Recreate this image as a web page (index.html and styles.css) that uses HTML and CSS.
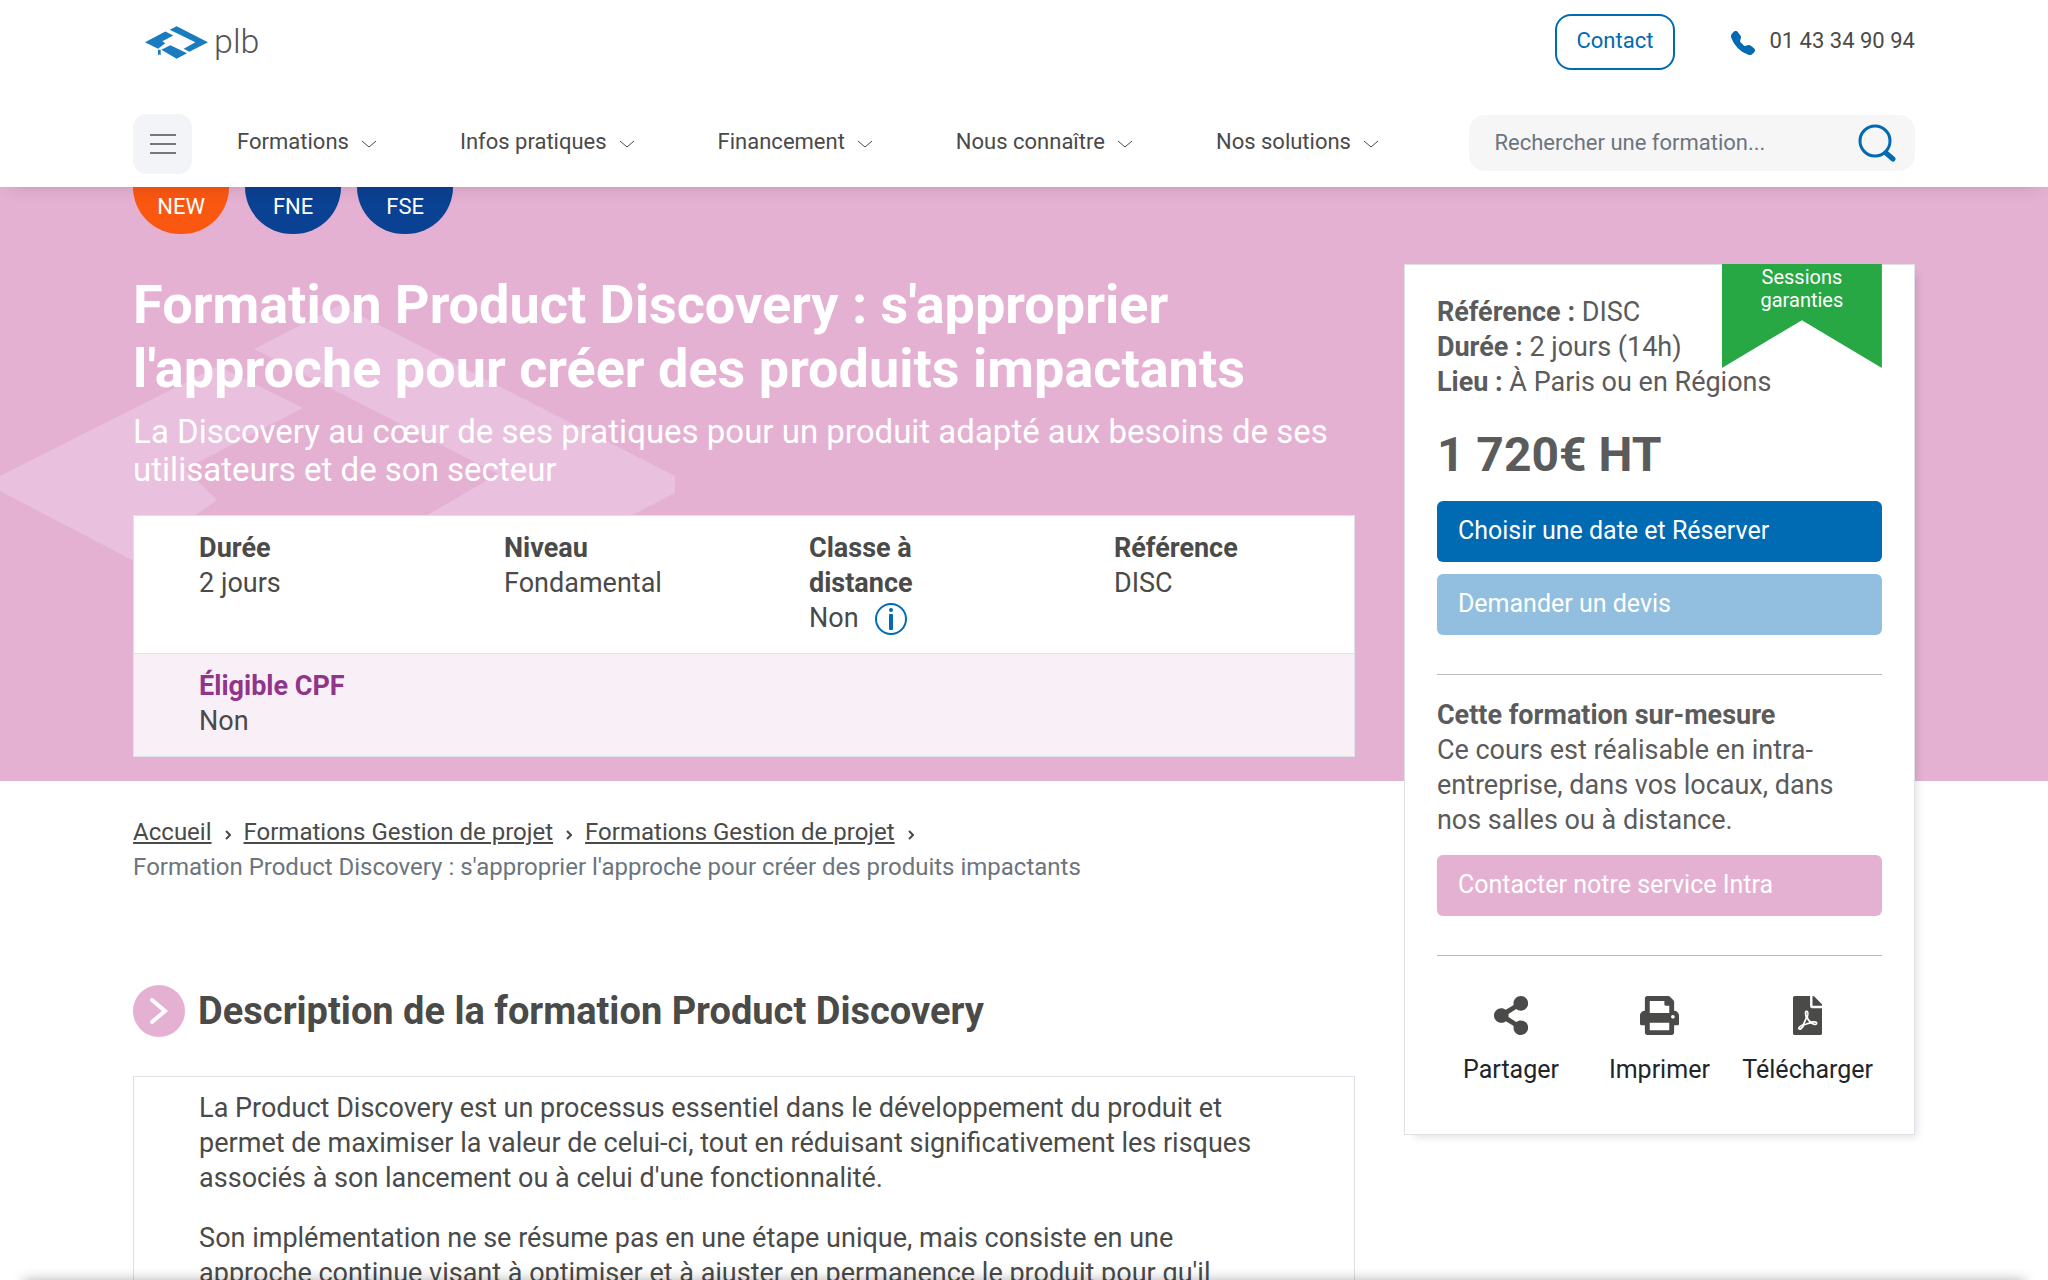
FILE: index.html
```
<!DOCTYPE html>
<html lang="fr">
<head>
    <meta charset="UTF-8">
    <meta name="viewport" content="width=device-width, initial-scale=1.0">
    <title>Formation Product Discovery</title>
    <link rel="stylesheet" href="styles.css">
</head>
<body>
    <header class="header">
        <div class="header-top">
            <a class="logo" href="#" aria-label="plb">
                <svg class="logo-mark" viewBox="45 50 189 98">
                    <path d="M45 98L106 66L130 78L97 95L106 101L84 118Z"/>
                    <path d="M119 61L140 50L234 98L178 127L161 118L196 98Z"/>
                    <path d="M94 121L121 107L171 131L140 148Z"/>
                    <path d="M84 121H92V138L88 134L84 138Z"/>
                </svg>
                <span class="logo-text">plb</span>
            </a>
            <div class="header-contact">
                <a class="btn-contact" href="#">Contact</a>
                <a class="phone" href="tel:0143349094">
                    <svg class="phone-icon" viewBox="0 0 16 16"><path d="M1.885.511a1.745 1.745 0 0 1 2.61.163L6.29 2.98c.329.423.445.974.315 1.494l-.547 2.19a.68.68 0 0 0 .178.643l2.457 2.457a.68.68 0 0 0 .644.178l2.189-.547a1.75 1.75 0 0 1 1.494.315l2.306 1.794c.829.645.905 1.87.163 2.611l-1.034 1.034c-.74.74-1.846 1.065-2.877.702a18.6 18.6 0 0 1-7.01-4.42 18.6 18.6 0 0 1-4.42-7.009c-.362-1.03-.037-2.137.703-2.877z"/></svg>
                    <span>01 43 34 90 94</span>
                </a>
            </div>
        </div>
        <div class="header-nav">
            <button class="burger" type="button" aria-label="Menu">
                <svg viewBox="0 0 28 22"><path d="M1 2H27M1 11H27M1 20H27"/></svg>
            </button>
            <nav class="nav">
                <a href="#">Formations <svg class="chevron" viewBox="0 0 16 8"><path d="M1 1L8 7L15 1"/></svg></a>
                <a href="#">Infos pratiques <svg class="chevron" viewBox="0 0 16 8"><path d="M1 1L8 7L15 1"/></svg></a>
                <a href="#">Financement <svg class="chevron" viewBox="0 0 16 8"><path d="M1 1L8 7L15 1"/></svg></a>
                <a href="#">Nous connaître <svg class="chevron" viewBox="0 0 16 8"><path d="M1 1L8 7L15 1"/></svg></a>
                <a href="#">Nos solutions <svg class="chevron" viewBox="0 0 16 8"><path d="M1 1L8 7L15 1"/></svg></a>
            </nav>
            <form class="search">
                <input type="text" placeholder="Rechercher une formation..." aria-label="Rechercher une formation">
                <button type="button" aria-label="Rechercher">
                    <svg viewBox="0 0 38 38"><circle cx="17" cy="17" r="15"/><path d="M28 29L35 35"/></svg>
                </button>
            </form>
        </div>
    </header>

    <div class="hero-bg">
        <svg viewBox="0 0 675 260">
            <path d="M0 176L218 66L303 108L185 169L217 200L132 260L0 191Z"/>
            <path d="M254 49L340 5L675 176V193L545 260H350L498 174Z"/>
        </svg>
    </div>

    <main class="page">
        <div class="content">
            <section class="hero">
                <div class="badges">
                    <span class="badge badge-new">NEW</span>
                    <span class="badge">FNE</span>
                    <span class="badge">FSE</span>
                </div>
                <h1>Formation Product Discovery : s'approprier l'approche pour créer des produits impactants</h1>
                <p class="subtitle">La Discovery au cœur de ses pratiques pour un produit adapté aux besoins de ses utilisateurs et de son secteur</p>
                <div class="infos">
                    <div class="infos-row">
                        <div><strong>Durée</strong><p>2 jours</p></div>
                        <div><strong>Niveau</strong><p>Fondamental</p></div>
                        <div>
                            <strong>Classe à distance</strong>
                            <p class="with-icon">Non
                                <svg class="info-icon" viewBox="0 0 32 32"><circle class="ring" cx="16" cy="16" r="15"/><circle cx="16" cy="7" r="2"/><rect x="14" y="11" width="4" height="16" rx="1"/></svg>
                            </p>
                        </div>
                        <div><strong>Référence</strong><p>DISC</p></div>
                    </div>
                    <div class="infos-row cpf">
                        <div><strong>Éligible CPF</strong><p>Non</p></div>
                    </div>
                </div>
            </section>

            <nav class="breadcrumb" aria-label="Fil d'ariane">
                <a href="#">Accueil</a>
                <svg viewBox="0 0 6 10"><path d="M1 1L5 5L1 9"/></svg>
                <a href="#">Formations Gestion de projet</a>
                <svg viewBox="0 0 6 10"><path d="M1 1L5 5L1 9"/></svg>
                <a href="#">Formations Gestion de projet</a>
                <svg viewBox="0 0 6 10"><path d="M1 1L5 5L1 9"/></svg>
                <span>Formation Product Discovery : s'approprier l'approche pour créer des produits impactants</span>
            </nav>

            <section>
                <h2>
                    <svg class="title-icon" viewBox="0 0 52 52"><circle cx="26" cy="26" r="26"/><path d="M19 15L32 26L19 37"/></svg>
                    Description de la formation Product Discovery
                </h2>
                <div class="description">
                    <p>La Product Discovery est un processus essentiel dans le développement du produit et permet de maximiser la valeur de celui-ci, tout en réduisant significativement les risques associés à son lancement ou à celui d'une fonctionnalité.</p>
                    <p>Son implémentation ne se résume pas en une étape unique, mais consiste en une approche continue visant à optimiser et à ajuster en permanence le produit pour qu'il</p>
                </div>
            </section>
        </div>

        <aside class="card">
            <div class="ribbon">Sessions garanties</div>
            <p><strong>Référence :</strong> DISC</p>
            <p><strong>Durée :</strong> 2 jours (14h)</p>
            <p><strong>Lieu :</strong> À Paris ou en Régions</p>
            <p class="price">1 720€ HT</p>
            <a class="btn btn-blue" href="#">Choisir une date et Réserver</a>
            <a class="btn btn-light" href="#">Demander un devis</a>
            <hr>
            <p><strong>Cette formation sur-mesure</strong></p>
            <p>Ce cours est réalisable en intra-entreprise, dans vos locaux, dans nos salles ou à distance.</p>
            <a class="btn btn-pink" href="#">Contacter notre service Intra</a>
            <hr>
            <div class="actions">
                <button type="button">
                    <svg viewBox="0 0 448 512"><path d="M352 320c-22.608 0-43.387 7.819-59.79 20.895l-102.486-64.054a96.551 96.551 0 0 0 0-41.683l102.486-64.054C308.613 184.181 329.392 192 352 192c53.019 0 96-42.981 96-96S405.019 0 352 0s-96 42.981-96 96c0 7.158.79 14.13 2.276 20.841L155.79 180.895C139.387 167.819 118.608 160 96 160c-53.019 0-96 42.981-96 96s42.981 96 96 96c22.608 0 43.387-7.819 59.79-20.895l102.486 64.054A96.301 96.301 0 0 0 256 416c0 53.019 42.981 96 96 96s96-42.981 96-96-42.981-96-96-96z"/></svg>
                    Partager
                </button>
                <button type="button">
                    <svg viewBox="0 0 512 512"><path d="M448 192V77.25c0-8.49-3.37-16.62-9.37-22.63L393.37 9.37c-6-6-14.14-9.37-22.63-9.37H96C78.33 0 64 14.33 64 32v160c-35.35 0-64 28.65-64 64v112c0 8.84 7.16 16 16 16h48v96c0 17.67 14.33 32 32 32h320c17.67 0 32-14.33 32-32v-96h48c8.84 0 16-7.16 16-16V256c0-35.35-28.65-64-64-64zm-64 256H128v-96h256v96zm0-224H128V64h192v48c0 8.84 7.16 16 16 16h48v96zm48 72c-13.25 0-24-10.75-24-24 0-13.26 10.75-24 24-24s24 10.74 24 24c0 13.25-10.75 24-24 24z"/></svg>
                    Imprimer
                </button>
                <button type="button">
                    <svg viewBox="0 0 384 512"><path d="M181.9 256.1c-5-16-4.9-46.9-2-46.9 8.4 0 7.6 36.9 2 46.9zm-1.7 47.2c-7.7 20.2-17.3 43.3-28.4 62.7 18.3-7 39-17.2 62.9-21.9-12.7-9.6-24.9-23.4-34.5-40.8zM86.1 428.1c0 .8 13.2-5.4 34.9-40.2-6.7 6.3-29.1 24.5-34.9 40.2zM248 160h136v328c0 13.3-10.7 24-24 24H24c-13.3 0-24-10.7-24-24V24C0 10.7 10.7 0 24 0h200v136c0 13.2 10.8 24 24 24zm-8 171.8c-20-12.2-33.3-29-42.7-53.8 4.5-18.5 11.6-46.6 6.2-64.2-4.7-29.4-42.4-26.5-47.8-6.8-5 18.3-.4 44.1 8.1 77-11.6 27.6-28.7 64.6-40.8 85.8-.1 0-.1.1-.2.1-27.1 13.9-73.6 44.5-54.5 68 5.6 6.9 16 10 21.5 10 17.9 0 35.7-18 61.1-61.8 25.8-8.5 54.1-19.1 79-23.2 21.7 11.8 47.1 19.5 64 19.5 29.2 0 31.2-32 19.7-43.4-13.9-13.6-54.3-9.7-73.6-7.2zM377 105L279 7c-4.5-4.5-10.6-7-17-7h-6v128h128v-6.1c0-6.3-2.5-12.4-7-16.9zm-74.1 255.3c4.1-2.7-2.5-11.9-42.8-9 37.1 15.8 42.8 9 42.8 9z"/></svg>
                    Télécharger
                </button>
            </div>
        </aside>
    </main>

    <div class="bottom-bar"></div>
</body>
</html>
```
FILE: styles.css
```
* {
    box-sizing: border-box;
    margin: 0;
    padding: 0;
}

body {
    position: relative;
    height: 100vh;
    overflow: hidden;
    font-family: Roboto, sans-serif;
    font-size: 27px;
    line-height: 35px;
    color: #4a4a49;
    background: #fff;
}

a {
    color: inherit;
    text-decoration: none;
}

button {
    background: transparent;
    border: none;
    color: inherit;
    font: inherit;
    cursor: pointer;
}

/* Header */
.header {
    position: relative;
    z-index: 2;
    padding: 14px 6.5% 13px;
    font-size: 22px;
    line-height: 30px;
    background: #fff;
    box-shadow: 0 10px 16px -10px rgba(0, 0, 0, 0.15);
}

.header-top,
.header-nav,
.header-contact,
.logo,
.phone,
.nav,
.nav a,
.search {
    display: flex;
    align-items: center;
}

.header-top {
    justify-content: space-between;
    margin-bottom: 44px;
}

.logo {
    gap: 6px;
    margin-left: 12px;
}

.logo-mark {
    width: 63px;
    height: 33px;
    fill: #1b7bc0;
}

.logo-text {
    margin-bottom: 2px;
    font-size: 34px;
    font-weight: 300;
    color: #555;
}

.header-contact {
    gap: 56px;
}

.btn-contact {
    padding: 10px 20px 12px;
    border: 2px solid #006ab3;
    border-radius: 16px;
    color: #006ab3;
}

.phone {
    gap: 14px;
    margin-bottom: 2px;
}

.phone-icon {
    width: 24px;
    height: 24px;
    margin-top: 4px;
    fill: #006ab3;
}

.burger {
    width: 59px;
    height: 60px;
    margin-right: 45px;
    border-radius: 14px;
    background: #f3f4f7;
}

.burger svg {
    display: block;
    width: 28px;
    margin: auto;
    fill: none;
    stroke: #77787b;
    stroke-width: 2;
}

.nav {
    gap: 83px;
    margin-bottom: 4px;
}

.nav a {
    gap: 12px;
}

.chevron {
    width: 16px;
    height: 8px;
    margin-top: 4px;
    fill: none;
    stroke: #4a4a49;
    stroke-width: 1;
}

.search {
    width: 25%;
    height: 56px;
    margin: 0 0 2px auto;
    padding: 0 19px 0 25px;
    border-radius: 16px;
    background: #f6f6f6;
}

.search input {
    flex: 1;
    min-width: 0;
    border: none;
    outline: none;
    background: transparent;
    font: inherit;
}

.search input::placeholder {
    color: #6c757d;
    opacity: 1;
}

.search svg {
    display: block;
    width: 38px;
    height: 38px;
    fill: none;
    stroke: #006ab3;
    stroke-width: 3;
    stroke-linecap: round;
}

.search svg path {
    stroke-width: 5;
}

/* Bandeau */
.hero-bg {
    position: absolute;
    z-index: -1;
    top: 187px;
    left: 0;
    right: 0;
    height: 594px;
    padding-top: 113px;
    background: #e5b1d3;
}

.hero-bg svg {
    display: block;
    width: 675px;
    fill: #e9c0dd;
}

.page {
    display: flex;
    align-items: flex-start;
    gap: 49px;
    padding: 0 6.5%;
}

.content {
    flex: 1;
}

.badges {
    display: flex;
    gap: 16px;
}

.badge {
    width: 96px;
    height: 47px;
    border-radius: 0 0 48px 48px;
    background: #0b4193;
    color: #fff;
    font-size: 22px;
    line-height: 40px;
    text-align: center;
}

.badge-new {
    background: #fa5711;
}

h1 {
    margin: 39px 0 12px;
    font-size: 54px;
    line-height: 64px;
    color: #fff;
}

.subtitle {
    font-size: 33px;
    line-height: 38px;
    color: #fff;
}

.infos {
    margin-top: 26px;
    border: 1px solid #dee2e6;
    background: #fff;
}

.infos-row {
    display: grid;
    grid-template-columns: repeat(4, 1fr);
    padding: 15px 0 17px;
}

.infos-row > div {
    padding: 0 65px;
}

.infos-row strong {
    display: block;
}

.with-icon {
    display: flex;
    align-items: center;
    gap: 16px;
}

.info-icon {
    width: 32px;
    height: 32px;
    fill: #006ab3;
}

.info-icon .ring {
    fill: none;
    stroke: #006ab3;
    stroke-width: 2;
}

.cpf {
    border-top: 1px solid #dee2e6;
    background: #f9eff7;
}

.cpf strong {
    color: #91348b;
    white-space: nowrap;
}

/* Fil d'ariane */
.breadcrumb {
    display: flex;
    flex-wrap: wrap;
    align-items: center;
    column-gap: 13px;
    margin-top: 58px;
    font-size: 24px;
}

.breadcrumb a {
    text-decoration: underline;
}

.breadcrumb svg {
    width: 6px;
    margin-top: 4px;
    fill: none;
    stroke: #4a4a49;
    stroke-width: 2;
}

.breadcrumb span {
    color: #6c757d;
}

/* Description */
h2 {
    display: flex;
    align-items: center;
    gap: 13px;
    margin: 100px 0 39px;
    font-size: 38px;
    line-height: 52px;
}

.title-icon {
    width: 52px;
    height: 52px;
    fill: #e5b1d3;
}

.title-icon path {
    fill: none;
    stroke: #fff;
    stroke-width: 4;
    stroke-linecap: round;
}

.description {
    padding: 14px 65px;
    border: 1px solid #dee2e6;
}

.description p {
    margin-bottom: 25px;
}

/* Carte */
.card {
    position: relative;
    width: 511px;
    margin-top: 77px;
    padding: 30px 32px 47px;
    border: 1px solid #dee2e6;
    background: #fff;
    box-shadow: 6px 6px 8px -4px rgba(0, 0, 0, 0.12);
    color: #5b5b5b;
}

.ribbon {
    position: absolute;
    top: -1px;
    right: 32px;
    width: 160px;
    height: 104px;
    padding: 2px 30px;
    background: #28a745;
    clip-path: polygon(0 0, 100% 0, 100% 100%, 50% 54%, 0 100%);
    color: #fff;
    font-size: 20px;
    line-height: 23px;
    text-align: center;
}

.card .price {
    margin: 27px 0 18px;
    font-size: 48px;
    font-weight: bold;
    line-height: 56px;
}

.btn {
    display: block;
    padding: 12px 21px 14px;
    border-radius: 6px;
    color: #fff;
    font-size: 25px;
}

.btn-blue {
    margin-bottom: 12px;
    background: #006ab3;
}

.btn-light {
    background: #92bfe0;
}

.btn-pink {
    margin-top: 17px;
    background: #e5b1d3;
}

.card hr {
    margin: 39px 0 23px;
    border: none;
    border-top: 1px solid #bbb;
}

.actions {
    display: grid;
    grid-template-columns: repeat(3, 1fr);
    margin-top: 40px;
    color: #212529;
    font-size: 25px;
}

.actions svg {
    display: block;
    height: 39px;
    margin: 0 auto 17px;
    fill: #4a4a49;
}

/* Barre fixe, masquée sous la fenêtre */
.bottom-bar {
    position: fixed;
    top: 100%;
    left: 24px;
    right: 24px;
    height: 80px;
    box-shadow: 0 0 12px rgba(0, 0, 0, 0.3);
}
```
